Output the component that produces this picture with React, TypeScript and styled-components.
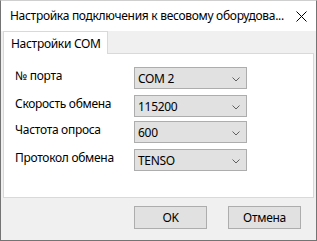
import React, { ReactElement } from "react";
import styled, { createGlobalStyle } from "styled-components";

const GlobalStyle = createGlobalStyle`
  html, body {
    margin: 0;
    padding: 0;
    background: #ffffff;
  }
  body {
    font-family: "Noto Sans", "Liberation Sans", sans-serif;
    font-size: 12px;
    letter-spacing: -0.3px;
    color: #000000;
  }
`;

const Window = styled.div`
  width: 317px;
  height: 241px;
  box-sizing: border-box;
  display: flex;
  flex-direction: column;
  border: 1px solid #747474;
  border-top-color: #cfcfcf;
  background: #f0f0f0;
`;

const TitleBar = styled.div`
  height: 30px;
  flex-shrink: 0;
  display: flex;
  align-items: center;
  justify-content: space-between;
  padding: 0 9px 0 9px;
  background: #ffffff;

  .title {
    font-size: 12px;
    line-height: 16px;
    white-space: nowrap;
  }
`;

const CloseButton = styled.div`
  width: 12px;
  height: 12px;
  display: flex;
  align-items: center;
  justify-content: center;
`;

const Body = styled.div`
  flex: 1;
  display: flex;
  flex-direction: column;
  padding: 0 2px 0 2px;
`;

const TabStrip = styled.div`
  height: 22px;
  display: flex;
  align-items: flex-end;
`;

const Tab = styled.div<{ $active?: boolean }>`
  height: 23px;
  box-sizing: border-box;
  padding: 0 6px 0 7px;
  margin-bottom: -1px;
  display: flex;
  align-items: center;
  background: ${(p) => (p.$active ? "#ffffff" : "#f0f0f0")};
  border: 1px solid #d9d9d9;
  border-bottom: none;
  position: relative;
  z-index: 1;
  font-size: 12px;
`;

const TabPanel = styled.div`
  height: 145px;
  box-sizing: border-box;
  background: #ffffff;
  border: 1px solid #d9d9d9;
  padding: 13px 0 0 11px;
  display: flex;
  flex-direction: column;
`;

const FieldRow = styled.div<{ $mt: number }>`
  display: flex;
  align-items: flex-start;
  margin-top: ${(p) => p.$mt}px;
`;

const Label = styled.div`
  width: 119px;
  font-size: 12px;
  line-height: 16px;
  padding-top: 1px;
`;

const Combo = styled.div`
  width: 113px;
  height: 22px;
  box-sizing: border-box;
  background: #e1e1e1;
  border: 1px solid #adadad;
  display: flex;
  align-items: center;
  justify-content: space-between;
  padding: 2px 6px 0 3px;
  font-size: 12px;
  line-height: 16px;
`;

const Footer = styled.div`
  flex: 1;
  display: flex;
  justify-content: flex-end;
  align-items: flex-start;
  gap: 21px;
  padding: 8px 13px 0 0;
`;

const Button = styled.div`
  width: 73px;
  height: 23px;
  box-sizing: border-box;
  background: #e1e1e1;
  border: 1px solid #adadad;
  display: flex;
  align-items: center;
  justify-content: center;
  font-size: 12px;
`;

const Chevron = (): ReactElement => (
  <svg width="8" height="5" viewBox="0 0 8 5">
    <path d="M0.5 0.5 L4 4 L7.5 0.5" fill="none" stroke="#606060" strokeWidth="1" />
  </svg>
);

const fields = [
  { label: "№ порта", value: "COM 2", mt: 0 },
  { label: "Скорость обмена", value: "115200", mt: 6 },
  { label: "Частота опроса", value: "600", mt: 4 },
  { label: "Протокол обмена", value: "TENSO", mt: 6 },
];

const App = (): ReactElement => {
  return (
    <>
      <GlobalStyle />
      <Window>
        <TitleBar>
          <span className="title">Настройка подключения к весовому оборудова...</span>
          <CloseButton>
            <svg width="11" height="11" viewBox="0 0 11 11">
              <path d="M0.5 0.5 L10.5 10.5 M10.5 0.5 L0.5 10.5" stroke="#000" strokeWidth="1" />
            </svg>
          </CloseButton>
        </TitleBar>
        <Body>
          <TabStrip>
            <Tab $active>Настройки COM</Tab>
          </TabStrip>
          <TabPanel>
            {fields.map((f) => (
              <FieldRow key={f.label} $mt={f.mt}>
                <Label>{f.label}</Label>
                <Combo>
                  <span>{f.value}</span>
                  <Chevron />
                </Combo>
              </FieldRow>
            ))}
          </TabPanel>
          <Footer>
            <Button>OK</Button>
            <Button>Отмена</Button>
          </Footer>
        </Body>
      </Window>
    </>
  );
};

export default App;
